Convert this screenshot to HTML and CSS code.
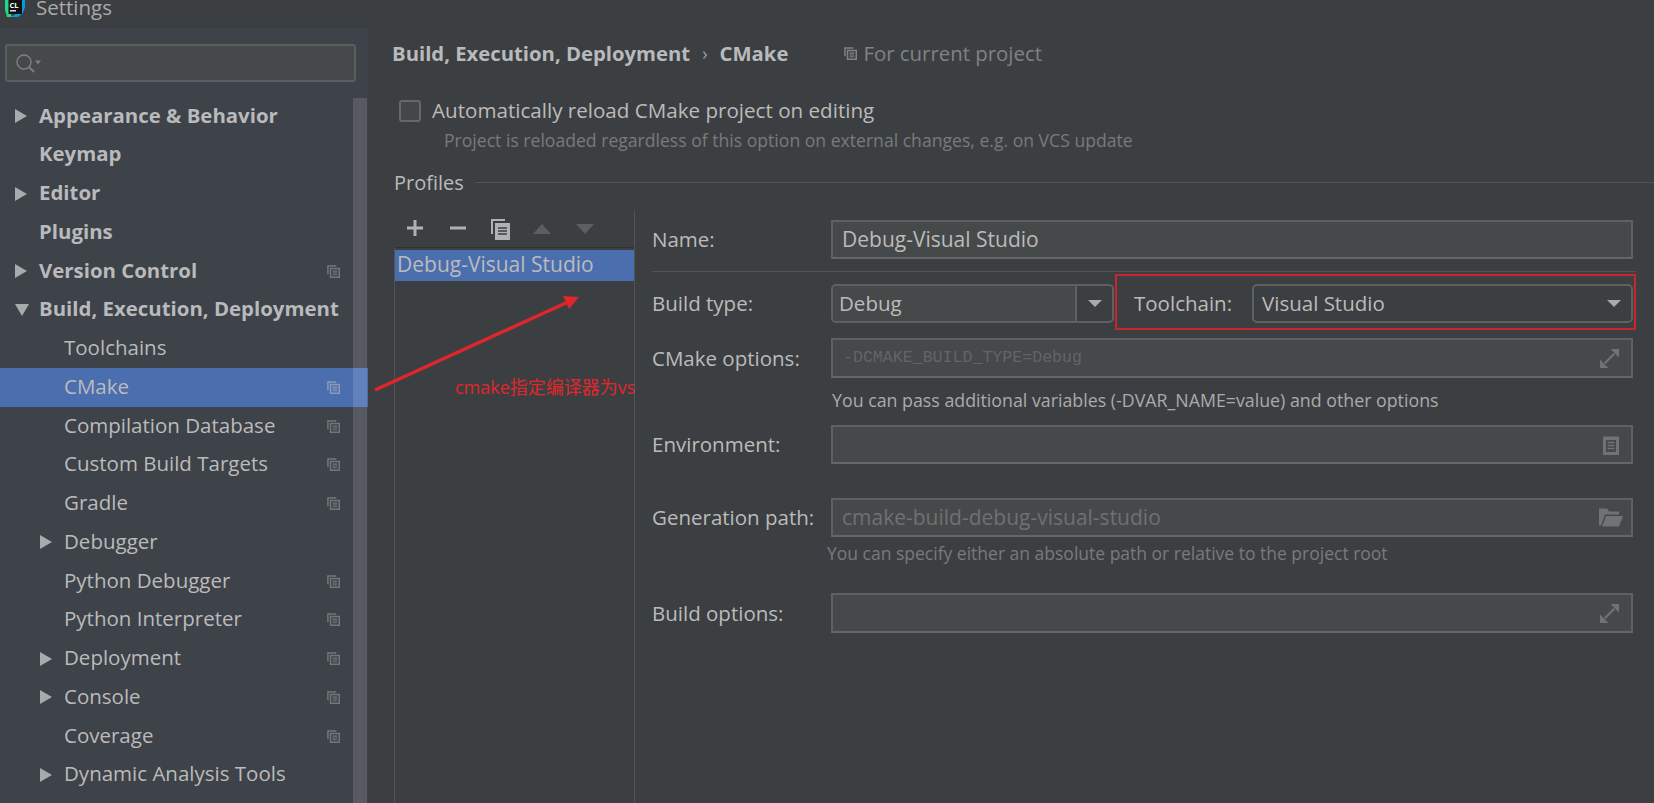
FILE: index.html
```html
<!DOCTYPE html>
<html lang="en">
<head>
  <meta charset="UTF-8">
  <title>Settings</title>
  <link rel="stylesheet" href="styles.css">
</head>
<body>

  <svg class="defs" width="0" height="0">
    <symbol id="copy" viewBox="0 0 14 14">
      <path d="M1 10V1h9" fill="none" stroke="currentColor" stroke-width="1.6"/>
      <path d="M3.8 3.8h9.4v9.4H3.8z" fill="none" stroke="currentColor" stroke-width="1.6"/>
      <path d="M6 6.6h5M6 8.6h5M6 10.6h5" stroke="currentColor" stroke-width="1.1"/>
    </symbol>
    <symbol id="expand" viewBox="0 0 18 18">
      <path d="M10 0h8v8zM0 10v8h8z" fill="currentColor"/>
      <path d="M13.500 4.500l-9 9" stroke="currentColor" stroke-width="2.200"/>
    </symbol>
  </svg>

  <header class="titlebar">
    <svg class="logo" width="20" height="17" viewBox="0 0 20 17">
      <path d="M0 0h5L4 9l3 8H2L0 10z" fill="#21d789"/>
      <path d="M14 0h6v7l-2 6-5 4H6l6-4z" fill="#009ae5"/>
      <rect x="3.500" y="0" width="13.500" height="14" fill="#111"/>
      <rect x="5" y="10" width="6" height="1.500" fill="#ddd"/>
      <text class="logo-text" x="4.500" y="7.500">CL</text>
    </svg>
    <span class="title">Settings</span>
  </header>

  <div class="main">
    <aside class="sidebar">
      <div class="search">
        <svg width="26" height="20" viewBox="0 0 26 20">
          <circle cx="8" cy="8" r="7" fill="none" stroke="#7d8083" stroke-width="1.400"/>
          <path d="M13 13l5 5" stroke="#7d8083" stroke-width="1.800"/>
          <path d="M19 6.500h6l-3 4z" fill="#7d8083"/>
        </svg>
      </div>

      <ul class="tree">
        <li class="row top"><i class="arrow"></i><span>Appearance &amp; Behavior</span></li>
        <li class="row top"><i class="slot"></i><span>Keymap</span></li>
        <li class="row top"><i class="arrow"></i><span>Editor</span></li>
        <li class="row top"><i class="slot"></i><span>Plugins</span></li>
        <li class="row top"><i class="arrow"></i><span>Version Control</span><svg class="row-icon"><use href="#copy"/></svg></li>
        <li class="row top"><i class="arrow open"></i><span>Build, Execution, Deployment</span></li>
        <li class="row sub"><i class="slot"></i><span>Toolchains</span></li>
        <li class="row sub selected"><i class="slot"></i><span>CMake</span><svg class="row-icon"><use href="#copy"/></svg></li>
        <li class="row sub"><i class="slot"></i><span>Compilation Database</span><svg class="row-icon"><use href="#copy"/></svg></li>
        <li class="row sub"><i class="slot"></i><span>Custom Build Targets</span><svg class="row-icon"><use href="#copy"/></svg></li>
        <li class="row sub"><i class="slot"></i><span>Gradle</span><svg class="row-icon"><use href="#copy"/></svg></li>
        <li class="row sub"><i class="arrow"></i><span>Debugger</span></li>
        <li class="row sub"><i class="slot"></i><span>Python Debugger</span><svg class="row-icon"><use href="#copy"/></svg></li>
        <li class="row sub"><i class="slot"></i><span>Python Interpreter</span><svg class="row-icon"><use href="#copy"/></svg></li>
        <li class="row sub"><i class="arrow"></i><span>Deployment</span><svg class="row-icon"><use href="#copy"/></svg></li>
        <li class="row sub"><i class="arrow"></i><span>Console</span><svg class="row-icon"><use href="#copy"/></svg></li>
        <li class="row sub"><i class="slot"></i><span>Coverage</span><svg class="row-icon"><use href="#copy"/></svg></li>
        <li class="row sub"><i class="arrow"></i><span>Dynamic Analysis Tools</span></li>
      </ul>

      <div class="scrollbar"></div>
    </aside>

    <section class="content">
      <div class="breadcrumb">
        <b>Build, Execution, Deployment</b>
        <span class="crumb-sep">›</span>
        <b>CMake</b>
        <span class="scope"><svg class="scope-icon"><use href="#copy"/></svg>For current project</span>
      </div>

      <label class="check">
        <span class="checkbox"></span>
        <span>Automatically reload CMake project on editing</span>
      </label>
      <p class="check-hint">Project is reloaded regardless of this option on external changes, e.g. on VCS update</p>

      <div class="group-title"><span>Profiles</span><hr></div>

      <div class="profiles">
        <div class="list-panel">
          <div class="toolbar">
            <svg width="18" height="18" viewBox="0 0 18 18"><path d="M9 1v16M1 9h16" stroke="#afb1b3" stroke-width="3"/></svg>
            <svg width="18" height="18" viewBox="0 0 18 18"><path d="M1 9h16" stroke="#afb1b3" stroke-width="3"/></svg>
            <svg class="tool-copy" width="20" height="21" viewBox="0 0 20 21">
              <path d="M1 15V1h13" fill="none" stroke="#afb1b3" stroke-width="2"/>
              <path d="M4 4h15v17H4z" fill="#afb1b3"/>
              <path d="M7 9h9M7 12h9M7 15h9" stroke="#3c3f41" stroke-width="1.300"/>
            </svg>
            <svg width="18" height="10" viewBox="0 0 18 10"><path d="M0 10L9 0l9 10z" fill="#5c5f61"/></svg>
            <svg width="18" height="10" viewBox="0 0 18 10"><path d="M0 0l9 10 9-10z" fill="#5c5f61"/></svg>
          </div>
          <div class="profile-list">
            <div class="profile selected-profile">Debug-Visual Studio</div>
          </div>
        </div>

        <div class="form">
          <div class="form-row">
            <label>Name:</label>
            <div class="input large"><span>Debug-Visual Studio</span></div>
          </div>
          <hr class="form-rule">
          <div class="form-row">
            <label>Build type:</label>
            <div class="combo combo-type">
              <span class="combo-value">Debug</span>
              <span class="combo-btn"><i class="caret"></i></span>
            </div>
            <label class="toolchain-label">Toolchain:</label>
            <div class="combo combo-toolchain">
              <span class="combo-value">Visual Studio</span>
              <span class="combo-btn plain"><i class="caret"></i></span>
            </div>
          </div>
          <div class="form-row row-cmake">
            <label>CMake options:</label>
            <div class="input disabled mono">
              <span>-DCMAKE_BUILD_TYPE=Debug</span>
              <svg class="field-icon"><use href="#expand"/></svg>
            </div>
          </div>
          <p class="hint bright">You can pass additional variables (-DVAR_NAME=value) and other options</p>
          <div class="form-row row-env">
            <label>Environment:</label>
            <div class="input">
              <svg class="field-icon env" viewBox="0 0 16 20">
                <path d="M0 1.500h16V20H0z M3 5v12h10V5z" fill="currentColor" fill-rule="evenodd"/>
                <path d="M4.500 7.500h7M4.500 10.500h7M4.500 13.500h7" stroke="currentColor" stroke-width="1.400"/>
              </svg>
            </div>
          </div>
          <div class="form-row row-gen">
            <label>Generation path:</label>
            <div class="input disabled large">
              <span>cmake-build-debug-visual-studio</span>
              <svg class="field-icon folder" viewBox="0 0 24 18">
                <path d="M0 0h8l2 3h10v3H6L2 17H0z" fill="currentColor"/>
                <path d="M7 7.500h17L20 18H3z" fill="currentColor"/>
              </svg>
            </div>
          </div>
          <p class="hint dim">You can specify either an absolute path or relative to the project root</p>
          <div class="form-row row-build">
            <label>Build options:</label>
            <div class="input">
              <svg class="field-icon"><use href="#expand"/></svg>
            </div>
          </div>
        </div>
      </div>
    </section>
  </div>

  <!-- annotations drawn over the screenshot -->
  <div class="mark-box"></div>
  <svg class="mark-arrow" width="230" height="110" viewBox="0 0 230 110">
    <path d="M5 98L198 10" stroke="#e0262b" stroke-width="3.400"/>
    <path d="M209 5l-16-1 6 13z" fill="#e0262b"/>
  </svg>
  <div class="mark-text">cmake指定编译器为vs</div>

</body>
</html>
```

FILE: styles.css
```css
* {
  box-sizing: border-box;
}

body {
  margin: 0;
  width: 1654px;
  height: 803px;
  overflow: hidden;
  position: relative;
  background: #3c3f41;
  color: #bbbbbb;
  font-family: "Open Sans", "Noto Sans CJK SC", sans-serif;
  font-size: 20.5px;
  line-height: 26px;
}

.defs {
  position: absolute;
}

hr {
  border: none;
  margin: 0;
}

/* title bar */

.titlebar {
  height: 28px;
  display: flex;
  align-items: flex-start;
  padding-left: 5px;
  overflow: hidden;
}

.logo {
  flex: none;
}

.logo-text {
  font-size: 7.500px;
  font-weight: bold;
  fill: #fff;
}

.title {
  margin-left: 11px;
  margin-top: -6px;
  color: #a9abad;
}

.main {
  display: flex;
  height: 775px;
  overflow: hidden;
}

/* sidebar */

.sidebar {
  width: 368px;
  flex: none;
  position: relative;
  background: #3e4249;
  padding-top: 16px;
  overflow: hidden;
}

.search {
  width: 351px;
  height: 38px;
  margin-left: 5px;
  margin-bottom: 14.7px;
  padding: 7px 0 0 9px;
  background: #45494a;
  border: 2px solid #5a5e61;
  border-radius: 3px;
}

.tree {
  list-style: none;
  margin: 0;
  padding: 0;
}

.row {
  height: 38.76px;
  display: flex;
  align-items: center;
  padding-right: 28px;
}

.row span {
  margin-top: -3px;
}

.top {
  padding-left: 15px;
  font-weight: bold;
  font-size: 20.4px;
  color: #b8babc;
}

.sub {
  padding-left: 40px;
}

.arrow,
.slot {
  flex: none;
  width: 24px;
}

.arrow::before {
  content: "";
  display: block;
  width: 0;
  height: 0;
  border-left: 12px solid #a8aaac;
  border-top: 7px solid transparent;
  border-bottom: 7px solid transparent;
}

.arrow.open::before {
  border-left: 7px solid transparent;
  border-right: 7px solid transparent;
  border-top: 12px solid #a8aaac;
  border-bottom: none;
}

.row-icon {
  flex: none;
  width: 13px;
  height: 13px;
  margin-left: auto;
  color: #74777a;
}

.selected {
  background: #4b6eaf;
}

.selected .row-icon {
  color: #8c9cb8;
}

.scrollbar {
  position: absolute;
  top: 70px;
  right: 1px;
  bottom: 0;
  width: 14px;
  background: rgba(255, 255, 255, 0.13);
}

/* content */

.content {
  flex: 1;
  min-width: 0;
  padding-left: 24px;
}

.breadcrumb {
  display: flex;
  align-items: center;
  height: 50px;
  color: #b8babc;
}

.breadcrumb b {
  font-size: 20.3px;
}

.crumb-sep {
  margin: 0 12px;
  font-size: 18px;
  color: #9a9c9e;
}

.scope {
  display: flex;
  align-items: center;
  margin-left: 56px;
  font-weight: normal;
  font-size: 20.4px;
  color: #808284;
}

.scope-icon {
  width: 13px;
  height: 13px;
  margin-right: 6px;
  color: #808284;
}

.check {
  display: flex;
  align-items: center;
  height: 22px;
  margin: 22px 0 0 7px;
  font-size: 20.6px;
}

.check span:last-child {
  margin-top: -2px;
}

.checkbox {
  width: 22px;
  height: 22px;
  margin-right: 11px;
  background: #43474a;
  border: 2px solid #65686a;
  border-radius: 3px;
}

.check-hint {
  margin: 6px 0 0 52px;
  font-size: 17.6px;
  line-height: 24px;
  color: #787a7c;
}

.group-title {
  display: flex;
  align-items: center;
  margin: 17px 0 0 2px;
  height: 26px;
  font-size: 20px;
}

.group-title span {
  margin-top: 1px;
}

.group-title hr {
  flex: 1;
  height: 1px;
  margin-left: 11px;
  background: #515355;
}

/* profiles */

.profiles {
  display: flex;
  margin-top: 15px;
  height: 593px;
  margin-left: 2px;
}

.list-panel {
  width: 241px;
  flex: none;
  display: flex;
  flex-direction: column;
  border-right: 1px solid #515355;
}

.toolbar {
  height: 37px;
  flex: none;
  display: flex;
  align-items: flex-start;
  gap: 25px;
  padding: 9px 0 0 12px;
}

.toolbar svg {
  flex: none;
}

.toolbar svg:nth-child(n + 4) {
  margin-top: 5px;
}

.toolbar .tool-copy {
  margin-left: -1px;
  margin-right: -3px;
}

.profile-list {
  flex: 1;
  border-top: 1px solid #323232;
  border-left: 1px solid #515355;
  padding-top: 2px;
}

.profile {
  height: 31px;
  line-height: 29px;
  padding-left: 2px;
  font-size: 21px;
}

.selected-profile {
  background: #4b6eaf;
}

.form {
  flex: 1;
  padding: 10px 21px 0 17px;
}

.form-row {
  display: flex;
  align-items: center;
  height: 39px;
}

.form-row label {
  width: 179px;
  flex: none;
  margin-top: -1px;
}

.input {
  flex: 1;
  height: 100%;
  display: flex;
  align-items: center;
  padding: 0 14px 0 9px;
  background: #45494a;
  border: 2px solid #5e6162;
  border-bottom-color: #646768;
}

.input span {
  margin-top: -1px;
}

.large {
  font-size: 21px;
}

.disabled {
  color: #6e7172;
}

.mono {
  padding-left: 10px;
  font-family: "Liberation Mono", monospace;
  font-size: 16.6px;
  color: #626566;
}

.field-icon {
  flex: none;
  width: 19px;
  height: 19px;
  margin-left: auto;
  margin-right: -2px;
  color: #6f7375;
}

.env {
  width: 16px;
  height: 20px;
}

.folder {
  width: 24px;
  margin-right: -6px;
}

.form-rule {
  height: 1px;
  margin: 12px -3px 12px 0;
  background: #515355;
}

.combo {
  height: 100%;
  display: flex;
  align-items: center;
  border: 2px solid #5e6162;
  border-radius: 5px;
  overflow: hidden;
}

.combo-type {
  width: 283px;
  flex: none;
}

.combo-toolchain {
  flex: 1;
}

.combo-value {
  flex: 1;
  align-self: stretch;
  display: flex;
  align-items: center;
  padding: 0 0 1px 6px;
}

.combo-type .combo-value {
  background: #45494a;
}

.combo-toolchain .combo-value {
  padding-left: 8px;
}

.combo-btn {
  width: 37px;
  align-self: stretch;
  display: flex;
  align-items: center;
  justify-content: center;
  border-left: 2px solid #5e6162;
}

.combo-btn.plain {
  border-left: none;
  width: 34px;
}

.caret {
  width: 0;
  height: 0;
  border-left: 7px solid transparent;
  border-right: 7px solid transparent;
  border-top: 7px solid #a8aaac;
}

.form-row .toolchain-label {
  width: 118px;
  margin-left: 20px;
}

.row-cmake {
  margin-top: 15px;
  height: 40px;
}

.hint {
  margin: 0;
  line-height: 24px;
}

.bright {
  margin: 10px 0 0 180px;
  font-size: 17.8px;
  color: #a9abad;
}

.dim {
  margin: 4px 0 0 175px;
  font-size: 17.5px;
  color: #787a7c;
}

.row-env {
  margin-top: 13px;
}

.row-gen {
  margin-top: 34px;
}

.row-build {
  margin-top: 28px;
  height: 40px;
}

/* annotations */

.mark-box {
  position: absolute;
  left: 1115px;
  top: 274px;
  width: 521px;
  height: 56px;
  border: 2px solid #c8262e;
}

.mark-arrow {
  position: absolute;
  left: 370px;
  top: 292px;
}

.mark-text {
  position: absolute;
  left: 455px;
  top: 374px;
  font-size: 18px;
  line-height: 26px;
  color: #e0262b;
  white-space: nowrap;
}
```
